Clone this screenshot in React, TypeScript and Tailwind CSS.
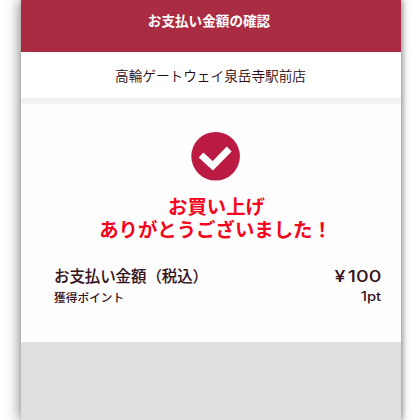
const store = '高輪ゲートウェイ泉岳寺駅前店'

function CheckBadge() {
  return (
    <svg viewBox="0 0 50 50" className="w-[50px] h-[50px]">
      <circle cx="24.6" cy="25.2" r="24.3" fill="#bb1a42" />
      <path d="M10 24 L21.8 34.8 L38.2 18" fill="none" stroke="#fff" strokeWidth="6.8" />
    </svg>
  )
}

export default function App() {
  return (
    <div className="w-[420px] h-[420px] overflow-hidden bg-white pl-[21px] font-['Noto_Sans_CJK_JP',sans-serif]">
      <div className="w-[380px] h-full flex flex-col bg-[#dfdfdf] shadow-[-3px_0_12px_rgba(0,0,0,0.38),2px_0_5px_rgba(0,0,0,0.3)]">
        <header className="h-[52px] shrink-0 bg-[#aa2c42] pt-[10px] pr-[4px] text-center text-[13.6px] leading-5 font-bold text-white">
          お支払い金額の確認
        </header>

        <div className="h-[52px] shrink-0 bg-white border-b-6 border-[#f2f2f2] pt-[13px] pr-px text-center text-[13.65px] leading-5 font-[350] text-[#2a0812]">
          {store}
        </div>

        <main className="h-[238px] shrink-0 bg-[#fefefe] pt-[27px] pl-[33px] pr-[20px]">
          <div className="flex justify-center -ml-[4px]">
            <CheckBadge />
          </div>

          <div className="mt-[15px] -ml-[13px] flex flex-col gap-[3px] text-center text-[19.4px] leading-[20px] font-bold text-[#f3061d] whitespace-nowrap">
            <p className="pl-[11px]">お買い上げ</p>
            <p className="pl-[9px]">ありがとうございました！</p>
          </div>

          <dl className="mt-[24px] text-[#35131d]">
            <div className="flex justify-between items-center h-[26px]">
              <dt className="text-[15.5px] font-medium -tracking-[0.1px] [-webkit-text-stroke:0.12px_#35131d]">お支払い金額（税込）</dt>
              <dd className="font-['Inter','Noto_Sans_CJK_JP',sans-serif] text-[16.5px] font-medium flex gap-[2px] origin-right scale-x-[1.19]">
                <span>¥</span>
                <span>100</span>
              </dd>
            </div>
            <div className="flex justify-between items-center h-[16px]">
              <dt className="text-[11.7px] font-medium">獲得ポイント</dt>
              <dd className="pt-px font-['Inter','Noto_Sans_CJK_JP',sans-serif] text-[12.5px] font-medium origin-right scale-x-[1.19]">1pt</dd>
            </div>
          </dl>
        </main>
      </div>
    </div>
  )
}
